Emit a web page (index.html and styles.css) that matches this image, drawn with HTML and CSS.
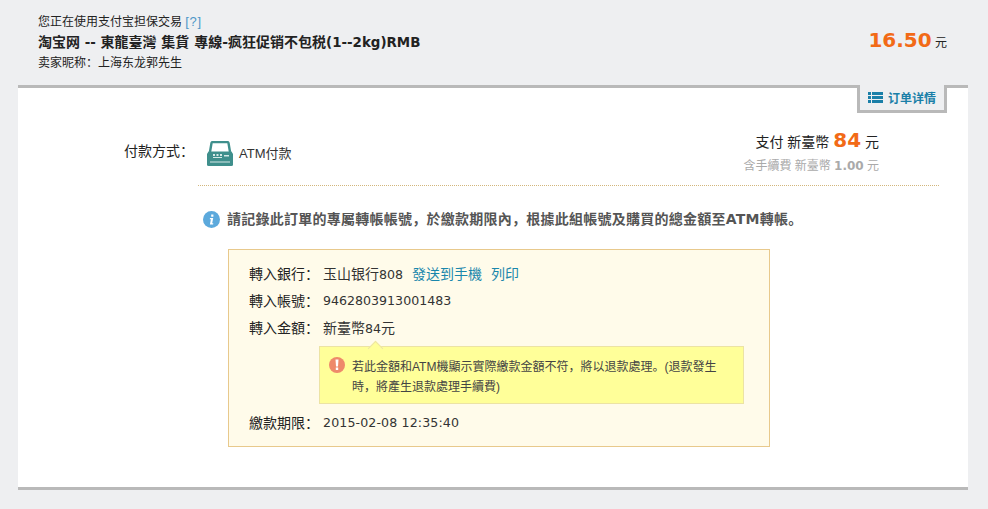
FILE: index.html
```html
<!DOCTYPE html>
<html lang="zh">
<head>
<meta charset="utf-8">
<title>ATM付款</title>
<link rel="stylesheet" href="styles.css">
</head>
<body>
<header class="order">
  <div class="order-info">
    <p class="order-line">您正在使用支付宝担保交易 <a class="help" href="#">[?]</a></p>
    <p class="order-title">淘宝网<span class="title-latin"> -- </span>東龍臺灣 集貨 專線-疯狂促销不包税<span class="title-latin">(1--2kg)RMB</span></p>
    <p class="order-line">卖家昵称：上海东龙郭先生</p>
  </div>
  <div class="order-price"><strong>16.50</strong> <span>元</span></div>
</header>
<main class="panel">
  <a class="detail-tab" href="#">
    <svg class="list-icon" width="15" height="11" viewBox="0 0 15 11"><path d="M0 0h3v3H0zM4 0h11v3H4zM0 4h3v3H0zM4 4h11v3H4zM0 8h3v3H0zM4 8h11v3H4z" fill="#1a7fa8"/></svg>
    订单详情
  </a>
  <section class="pay-row">
    <div class="pay-label">付款方式：</div>
    <svg class="atm-icon" width="26" height="25" viewBox="0 0 26 25">
      <path d="M3 11L4.500 2Q4.700 1 6 1H20Q21.300 1 21.500 2L23 11" fill="#fff" stroke="#3f8f8c" stroke-width="2.400"/>
      <path d="M1.500 10.500H24.500L26 13V23.500Q26 25 24.500 25H1.500Q0 25 0 23.500V13Z" fill="#3f8f8c"/>
      <path d="M6 13h2v2H6zM9.500 13h2v2H9.500zM13 13h2v2h-2zM6 16h9v1H6zM17 14h5v1.500h-5zM3 20.500h20v1H3z" fill="#d5e8e6"/>
    </svg>
    <div class="pay-name">ATM付款</div>
    <div class="pay-total">
      <div class="total-main">支付 新臺幣 <strong>84</strong> 元</div>
      <div class="total-fee">含手續費 新臺幣 <strong>1.00</strong> 元</div>
    </div>
  </section>
  <section class="instructions">
    <h2 class="notice">
      <svg class="round-icon" width="17" height="17" viewBox="0 0 17 17"><circle cx="8.500" cy="8.500" r="8.500" fill="#5ca9dc"/><path d="M8.200 3.500h2.200v2.200H8.200zM7 7h3.200l-1 5.200h1.100l-.2 1.300H6.900l1-5.200H6.800z" fill="#fff"/></svg>
      請記錄此訂單的專屬轉帳帳號，於繳款期限內，根據此組帳號及購買的總金額至ATM轉帳。
    </h2>
    <div class="account">
      <div class="acc-row"><span class="acc-label">轉入銀行：</span><span class="acc-value">玉山银行<span class="num">808</span><a class="link" href="#">發送到手機</a><a class="link" href="#">列印</a></span></div>
      <div class="acc-row"><span class="acc-label">轉入帳號：</span><span class="acc-value"><span class="num">9462803913001483</span></span></div>
      <div class="acc-row"><span class="acc-label">轉入金額：</span><span class="acc-value">新臺幣<span class="num">84</span>元</span></div>
      <div class="warning">
        <svg class="round-icon" width="16" height="16" viewBox="0 0 16 16"><circle cx="8" cy="8" r="8" fill="#ee8a6a"/><path d="M6.500 2.500h3l-.5 7H7zM6.800 10.500h2.400V13H6.800z" fill="#fff"/></svg>
        <p class="warning-text">若此金額和ATM機顯示實際繳款金額不符，將以退款處理。(退款發生時，將產生退款處理手續費)</p>
      </div>
      <div class="acc-row"><span class="acc-label">繳款期限：</span><span class="acc-value"><span class="num date">2015-02-08 12:35:40</span></span></div>
    </div>
  </section>
</main>
</body>
</html>
```
FILE: styles.css
```css
* { box-sizing: border-box; }
html, body { margin: 0; }
body {
  height: 509px;
  overflow: hidden;
  background: #eeeff1;
  color: #222;
  font-family: "Liberation Sans", "Noto Sans CJK TC", sans-serif;
  font-size: 12px;
}
a { text-decoration: none; }
p, h2 { margin: 0; }

.order {
  height: 85px;
  padding: 11px 41px 0 38px;
  display: flex;
  justify-content: space-between;
}
.order-line { height: 21px; line-height: 21px; font-size: 12px; }
.order-title {
  height: 21px;
  font: 700 14px/20px "DejaVu Sans", "Noto Sans CJK TC", sans-serif;
}
.title-latin { font-size: 13.400px; }
.help { color: #4f97c8; font-size: 13px; letter-spacing: 0.6px; }
.order-price { padding-top: 17px; }
.order-price strong { font: 700 20px "DejaVu Sans", sans-serif; color: #f26a16; }
.order-price span { font-size: 12px; }

.panel {
  position: relative;
  margin: 0 20px 0 18px;
  height: 405px;
  background: #fff;
  border-top: 3px solid #b9b9b9;
  border-bottom: 3px solid #b9b9b9;
  padding: 43px 29px 0 106px;
}
.detail-tab {
  position: absolute;
  top: -3px;
  right: 21px;
  width: 90px;
  height: 28px;
  background: #eeeff1;
  border: 3px solid #b9b9b9;
  border-top: 0;
  color: #1a7fa8;
  font-size: 12px;
  font-weight: 700;
  display: flex;
  align-items: center;
  justify-content: center;
  gap: 5px;
}

.pay-row {
  display: flex;
  align-items: flex-start;
  height: 55px;
  border-bottom: 1px dotted #d2b67c;
  margin-left: 74px;
}
.pay-label {
  margin-left: -74px;
  width: 83px;
  font-size: 14px;
  line-height: 20px;
  margin-top: 10px;
  flex: none;
}
.atm-icon { margin-top: 10px; flex: none; }
.pay-name { margin: 14px 0 0 6px; font-size: 13px; line-height: 18px; color: #333; }
.pay-total { margin-left: auto; margin-right: 60px; text-align: right; margin-top: -3px; }
.total-main { font-size: 14px; line-height: 25px; }
.total-main strong { font: 700 20px "DejaVu Sans", sans-serif; color: #f26a16; }
.total-fee { font-size: 12px; line-height: 22px; color: #aaa; }
.total-fee strong { font: 700 12px "DejaVu Sans", sans-serif; }

.instructions { padding: 25px 0 0 78px; }
.notice {
  margin-left: 1px;
  display: flex;
  gap: 7px;
  align-items: center;
  font: 700 14px/17px "DejaVu Sans", "Noto Sans CJK TC", sans-serif;
  letter-spacing: 0.25px;
  color: #555;
  white-space: nowrap;
}
.account {
  margin: 21px 0 0 26px;
  width: 542px;
  height: 198px;
  background: #fffbea;
  border: 1px solid #e8c98c;
  padding: 9px 20px 0;
}
.acc-row { display: flex; height: 27px; align-items: center; font-size: 14px; }
.acc-label { width: 74px; }
.acc-value { font-size: 14px; color: #333; }
.num { font: 12.600px "DejaVu Sans", sans-serif; }
.date { letter-spacing: 0.12px; }
.link { color: #1a87ac; margin-left: 9px; font-size: 14px; }
.warning {
  position: relative;
  margin: 6px 0 4px 70px;
  width: 425px;
  height: 58px;
  background: #ffff99;
  border: 1px solid #ece3a4;
  padding: 10px 20px 0 9px;
  display: flex;
  gap: 7px;
  align-items: flex-start;
}
.warning::before {
  content: "";
  position: absolute;
  top: -4px;
  left: 50px;
  width: 10px;
  height: 10px;
  background: #ffff99;
  border-left: 1px solid #ece3a4;
  border-top: 1px solid #ece3a4;
  transform: rotate(45deg);
}
.warning .round-icon { flex: none; }
.warning-text { font-size: 12px; line-height: 20px; color: #444; }
```
